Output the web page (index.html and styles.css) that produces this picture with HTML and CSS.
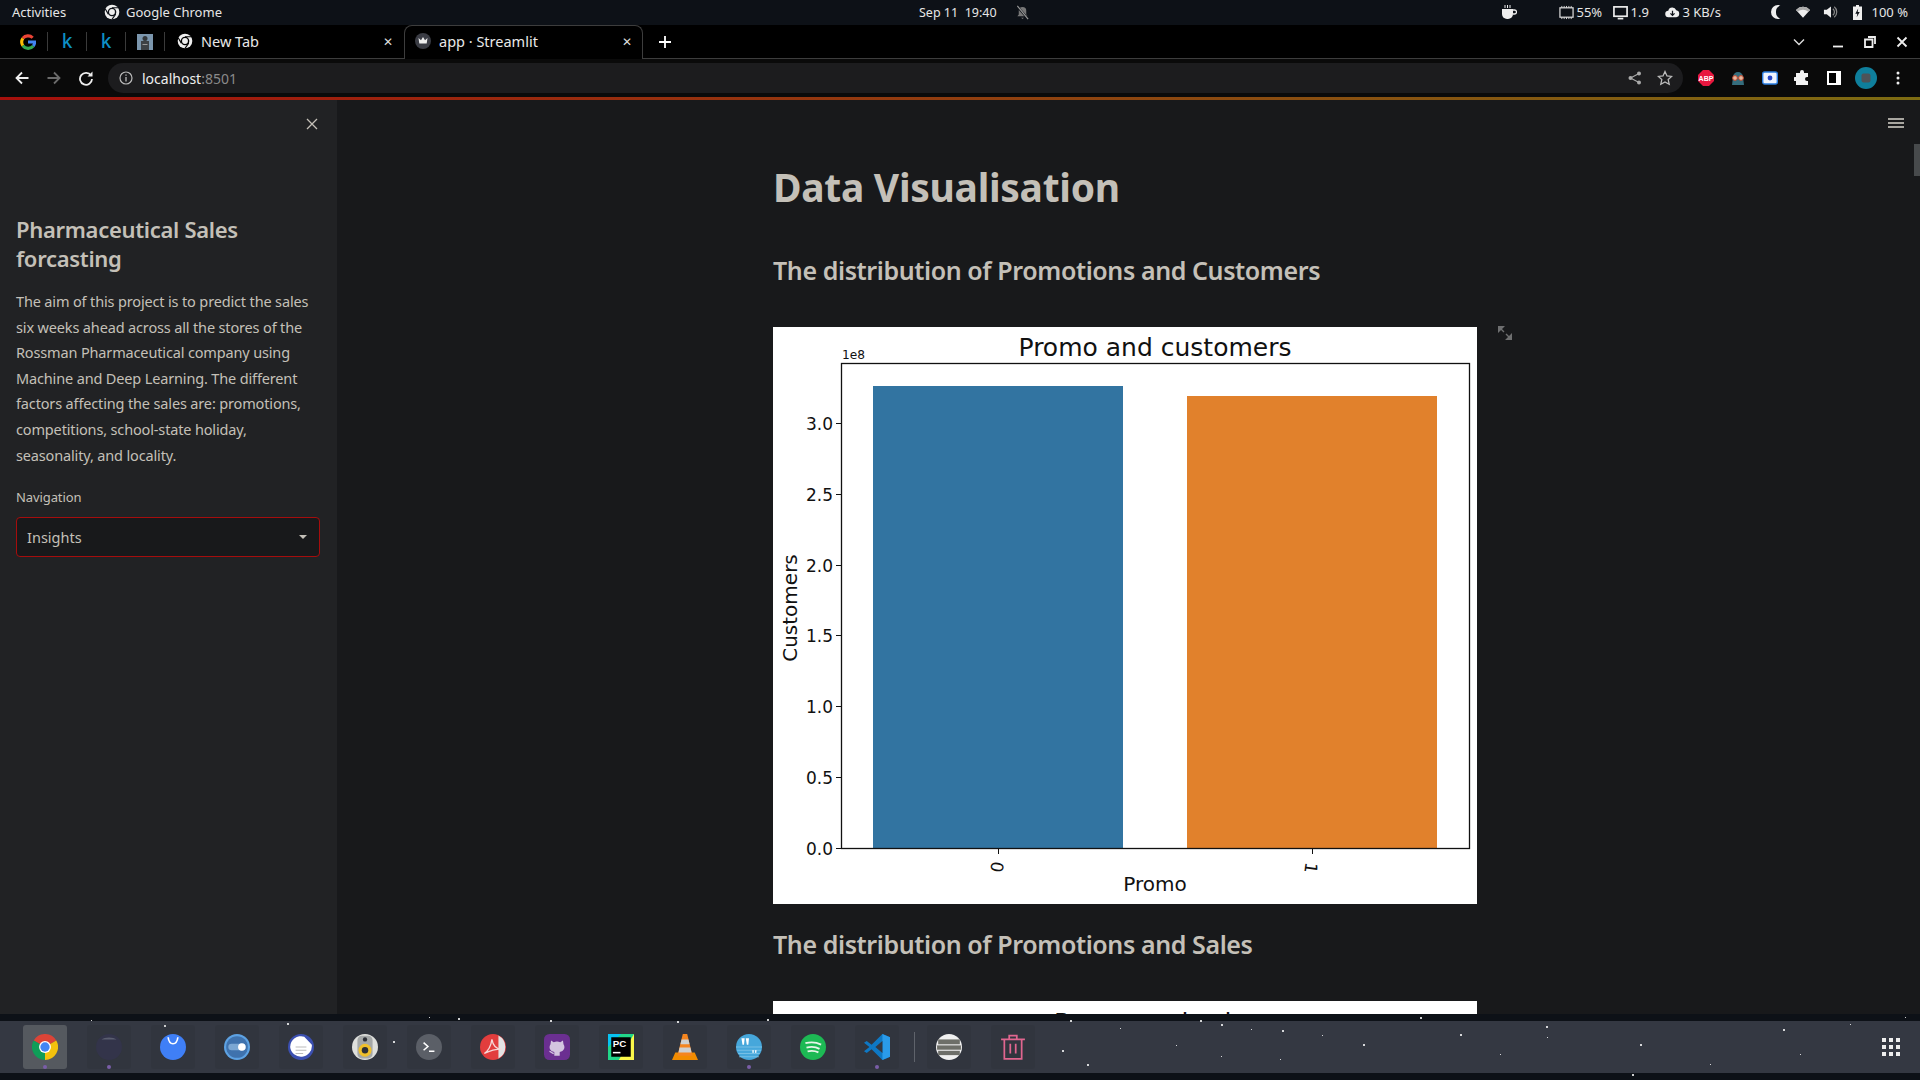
FILE: index.html
```html
<!DOCTYPE html>
<html lang="en">
<head>
    <meta charset="UTF-8">
    <title>app · Streamlit</title>
    <link rel="stylesheet" href="styles.css">
</head>
<body>
    <!-- desktop top bar -->
    <div class="topbar">
        <div class="top-left">
            <span class="activities">Activities</span>
            <span class="top-app">
                <svg class="ic16" viewBox="0 0 24 24"><circle cx="12" cy="12" r="11" fill="#eee"/><circle cx="12" cy="12" r="6.5" fill="#0d1117"/><circle cx="12" cy="12" r="4.4" fill="#eee"/><path d="M12 5.5H22M6.4 15.2 1.8 7M17.6 15.2 12 23" stroke="#0d1117" stroke-width="1.6"/></svg>
                Google Chrome
            </span>
        </div>
        <div class="top-center">
            <span class="clock">Sep 11&nbsp;&nbsp;19:40</span>
            <svg class="bell" viewBox="0 0 16 16"><path d="M8 2a4 4 0 0 0-4 4v4l-1.5 2h11L12 10V6a4 4 0 0 0-4-4zM6.5 13.5h3L8 15z" fill="#777"/><path d="M2 1l12 14" stroke="#0d1117" stroke-width="2.4"/><path d="M2.5 1l11.5 14" stroke="#999" stroke-width="1.2"/></svg>
        </div>
        <div class="top-right">
            <svg class="coffee" viewBox="0 0 16 16"><path d="M1 5h11v5a5 5 0 0 1-5 5H6a5 5 0 0 1-5-5z" fill="#eee"/><path d="M12 6h1.5a1.5 1.5 0 0 1 0 4H12" fill="none" stroke="#eee" stroke-width="1.3"/><path d="M4 1v3M6.5 1v3M9 1v3" stroke="#eee"/></svg>
            <span class="stat stat-cpu">
                <svg class="ic15" viewBox="0 0 16 16"><rect x="1" y="3" width="14" height="10" fill="none" stroke="#ddd" stroke-width="1.3"/><path d="M3 1v2M5.5 1v2M8 1v2M10.5 1v2M13 1v2M3 13v2M5.5 13v2M8 13v2M10.5 13v2M13 13v2" stroke="#ddd"/></svg>
                55%
            </span>
            <span class="stat stat-load">
                <svg class="ic15" viewBox="0 0 16 16"><rect x="1" y="2" width="14" height="10" fill="none" stroke="#eee" stroke-width="1.8"/><path d="M5 14.5h6" stroke="#eee" stroke-width="1.8"/></svg>
                1.9
            </span>
            <span class="stat stat-net">
                <svg class="ic15" viewBox="0 0 16 16"><path d="M4 13a3.5 3.5 0 0 1-.5-7A4.5 4.5 0 0 1 12 5.5 3.8 3.8 0 0 1 12 13z" fill="#eee"/><path d="M8 6v5M5.8 9 8 11.2 10.2 9" stroke="#0d1117" stroke-width="1.3" fill="none"/></svg>
                3 KB/s
            </span>
            <svg class="moon" viewBox="0 0 12 16"><path d="M9 1a7 7 0 0 0 0 14c1 0 1.6-.2 2.4-.5A6.5 6.5 0 0 1 7 8a6.5 6.5 0 0 1 4.4-6.5C10.6 1.2 10 1 9 1z" fill="#eee"/></svg>
            <svg class="wifi" viewBox="0 0 16 14"><path d="M0 4a11 11 0 0 1 16 0L8 13z" fill="#eee"/><path d="M0 4a11 11 0 0 1 16 0l-2 2.2a9 9 0 0 0-12 0z" fill="#aaa"/></svg>
            <svg class="vol" viewBox="0 0 16 14"><path d="M1 4.5h3L8.5 1v12L4 9.5H1z" fill="#eee"/><path d="M10.5 3.5a4.5 4.5 0 0 1 0 7M12 1.5a7 7 0 0 1 0 11" fill="none" stroke="#888" stroke-width="1.3"/></svg>
            <svg class="batt" viewBox="0 0 9 15"><path d="M3 0h3v1.5h3V15H0V1.5h3z" fill="#eee"/><path d="M5.2 3.5 2.3 8.8h2l-.6 3.5 3-5.4h-2z" fill="#0d1117"/></svg>
            <span class="stat-batt">100 %</span>
        </div>
    </div>

    <!-- chrome tab strip -->
    <div class="tabstrip">
        <div class="pinned">
            <span class="pin">
                <svg class="ic16" viewBox="0 0 24 24" fill="none" stroke-width="4.6"><path d="M19 5.6A10 10 0 0 0 4.3 6.5" stroke="#ea4335"/><path d="M4.3 6.5a10 10 0 0 0 0 11" stroke="#fbbc05"/><path d="M4.3 17.500A10 10 0 0 0 20 18" stroke="#34a853"/><path d="M20 18a10 10 0 0 0 2-6H12" stroke="#4285f4"/></svg>
            </span>
            <span class="pin"><span class="kfav">k</span></span>
            <span class="pin"><span class="kfav">k</span></span>
            <span class="pin">
                <svg class="ic16" viewBox="0 0 16 16"><rect width="16" height="16" fill="#7b96ad"/><rect x="4" y="7" width="8" height="9" fill="#3d4145"/><circle cx="8" cy="4.5" r="2.5" fill="#33373a"/><rect x="5.5" y="10" width="5" height="1" fill="#999"/></svg>
            </span>
            <span class="tab-newtab">
                <svg class="ic16" viewBox="0 0 24 24"><circle cx="12" cy="12" r="11" fill="#eee"/><circle cx="12" cy="12" r="6.5" fill="#000"/><circle cx="12" cy="12" r="4.4" fill="#eee"/><path d="M12 5.5H22M6.4 15.2 1.8 7M17.6 15.2 12 23" stroke="#000" stroke-width="1.6"/></svg>
                <span class="tab-title">New Tab</span>
                <span class="tab-x">✕</span>
            </span>
        </div>
        <div class="tab-active">
            <svg class="ic16" viewBox="0 0 16 16"><circle cx="8" cy="8" r="8" fill="#3a3c44"/><path d="M3.5 5 6 7.2 8 4l2 3.2L12.500 5l-.8 5.500H4.300z" fill="#eee"/></svg>
            <span class="tab-title">app · Streamlit</span>
            <span class="tab-x">✕</span>
        </div>
        <svg class="newtab" viewBox="0 0 14 14"><path d="M7 1v12M1 7h12" stroke="#fff" stroke-width="1.8"/></svg>
        <div class="win-btns">
            <svg class="win-chev" viewBox="0 0 12 8"><path d="M1 1.5 6 6.5l5-5" fill="none" stroke="#ddd" stroke-width="1.4"/></svg>
            <svg class="win-btn" viewBox="0 0 12 12"><path d="M1 10.5h10" stroke="#eee" stroke-width="1.8"/></svg>
            <svg class="win-btn" viewBox="0 0 12 12"><path d="M4 1h7v7M1 3.5h7.5V11H1z" fill="none" stroke="#eee" stroke-width="1.8"/></svg>
            <svg class="win-btn" viewBox="0 0 12 12"><path d="M1.5 1.5l9 9M10.5 1.5l-9 9" stroke="#eee" stroke-width="1.8"/></svg>
        </div>
    </div>

    <!-- chrome toolbar -->
    <div class="toolbar">
        <svg class="nav-ic" viewBox="0 0 16 16"><path d="M14.5 8h-12M8 2.5 2.500 8 8 13.500" fill="none" stroke="#eee" stroke-width="1.8"/></svg>
        <svg class="nav-ic" viewBox="0 0 16 16"><path d="M1.5 8h12M8 2.5 13.500 8 8 13.500" fill="none" stroke="#6b6b6b" stroke-width="1.8"/></svg>
        <svg class="nav-ic" viewBox="0 0 16 16"><path d="M13 5.5A6 6 0 1 0 14 9" fill="none" stroke="#eee" stroke-width="1.8"/><path d="M14.5 1.5v5h-5z" fill="#eee"/></svg>
        <div class="omnibox">
            <svg class="info" viewBox="0 0 14 14"><circle cx="7" cy="7" r="6" fill="none" stroke="#bbb" stroke-width="1.2"/><path d="M7 6v4.5M7 3.5v1.3" stroke="#bbb" stroke-width="1.3"/></svg>
            <span class="url">localhost<span class="url-port">:8501</span></span>
            <svg class="omni-ic share" viewBox="0 0 14 14"><circle cx="11" cy="2.5" r="2" fill="#aaa"/><circle cx="11" cy="11.5" r="2" fill="#aaa"/><circle cx="2.5" cy="7" r="2" fill="#aaa"/><path d="M11 2.5 2.5 7 11 11.5" fill="none" stroke="#aaa" stroke-width="1.1"/></svg>
            <svg class="omni-ic star" viewBox="0 0 16 16"><path d="M8 1.5l2 4.4 4.7.5-3.500 3.200 1 4.700L8 11.900l-4.200 2.400 1-4.700L1.300 6.400 6 5.900z" fill="none" stroke="#bbb" stroke-width="1.3"/></svg>
        </div>
        <div class="ext-row">
            <svg class="ext" viewBox="0 0 16 16"><path d="M5 0h6l5 5v6l-5 5H5l-5-5V5z" fill="#e8173f"/><text x="8" y="10.5" class="abp-text">ABP</text></svg>
            <svg class="ext" viewBox="0 0 16 16"><path d="M3 7a5 5 0 0 1 10 0l1 8H2z" fill="#356d7d"/><circle cx="5" cy="8" r="2.4" fill="#e5b8a0" stroke="#c7472c"/><circle cx="11" cy="8" r="2.4" fill="#e5b8a0" stroke="#c7472c"/></svg>
            <svg class="ext" viewBox="0 0 16 16"><rect x=".7" y="2" width="14.6" height="12" rx="2" fill="#eef4ff" stroke="#2a7de1" stroke-width="1.4"/><circle cx="8" cy="8" r="2.4" fill="#2747c9"/></svg>
            <svg class="ext" viewBox="0 0 16 16"><path d="M6 2a2 2 0 0 1 4 0v1h4v4h-1a2 2 0 0 0 0 4h1v4H2v-4H1a2 2 0 0 1 0-4h1V3h4z" fill="#f2f2f2"/></svg>
            <svg class="ext" viewBox="0 0 16 16"><path d="M1 1h14v14H1z" fill="#fff"/><rect x="3" y="3" width="7" height="10" fill="#000"/></svg>
            <svg class="ext avatar" viewBox="0 0 22 22"><circle cx="11" cy="11" r="11" fill="#0f7f9c"/><rect x="6.5" y="6.5" width="9" height="9" rx="2" fill="#4d5358"/></svg>
            <svg class="ext" viewBox="0 0 16 16"><circle cx="8" cy="3" r="1.5" fill="#eee"/><circle cx="8" cy="8" r="1.5" fill="#eee"/><circle cx="8" cy="13" r="1.5" fill="#eee"/></svg>
        </div>
    </div>
    <div class="deco"></div>

    <!-- streamlit app -->
    <div class="app">
        <aside class="sidebar">
            <div class="side-close">
                <svg class="close-ic" viewBox="0 0 12 12"><path d="M1 1l10 10M11 1 1 11" stroke="#c4c0b8" stroke-width="1.3"/></svg>
            </div>
            <h2 class="side-title">Pharmaceutical Sales forcasting</h2>
            <p class="side-text">The aim of this project is to predict the sales six weeks ahead across all the stores of the Rossman Pharmaceutical company using Machine and Deep Learning. The different factors affecting the sales are: promotions, competitions, school-state holiday, seasonality, and locality.</p>
            <label class="nav-label">Navigation</label>
            <div class="select">
                <span>Insights</span>
                <span class="caret"></span>
            </div>
        </aside>
        <main class="main">
            <div class="hamburger"><span></span><span></span><span></span></div>
            <div class="scroll-thumb"></div>
            <div class="content">
                <h1>Data Visualisation</h1>
                <h2 class="sec-first">The distribution of Promotions and Customers</h2>
                <div class="chart-wrap">
                    <svg class="chart" viewBox="0 0 704 577">
                        <rect width="704" height="577" fill="#fff"/>
                        <text x="382" y="29" class="c-title">Promo and customers</text>
                        <text x="69" y="32" class="c-offset">1e8</text>
                        <rect x="100" y="59" width="250" height="462" fill="#3274a1"/>
                        <rect x="414" y="69" width="250" height="452" fill="#e1812c"/>
                        <rect x="68.5" y="36.5" width="628" height="485" fill="none" stroke="#111" stroke-width="1.3"/>
                        <path d="M63 96.5h5M63 167.5h5M63 238.5h5M63 308.5h5M63 379.5h5M63 450.5h5M63 521.5h5M225.5 522v5M539.5 522v5" stroke="#111"/>
                        <text x="60" y="103" class="c-tick">3.0</text>
                        <text x="60" y="174" class="c-tick">2.5</text>
                        <text x="60" y="245" class="c-tick">2.0</text>
                        <text x="60" y="315" class="c-tick">1.5</text>
                        <text x="60" y="386" class="c-tick">1.0</text>
                        <text x="60" y="457" class="c-tick">0.5</text>
                        <text x="60" y="528" class="c-tick">0.0</text>
                        <text transform="translate(218 539) rotate(98)" class="c-xtick">0</text>
                        <text transform="translate(532 540) rotate(98)" class="c-xtick">1</text>
                        <text x="382" y="564" class="c-label">Promo</text>
                        <text transform="translate(24 281) rotate(-90)" class="c-label">Customers</text>
                    </svg>
                    <svg class="expand" viewBox="0 0 14 14"><path d="M0 0h7L0 7zM14 14H7l7-7z" fill="#6e6f70"/><path d="M2 2l4 4M12 12 8 8" stroke="#6e6f70" stroke-width="1.4"/></svg>
                </div>
                <h2 class="sec-next">The distribution of Promotions and Sales</h2>
                <div class="chart-next">
                    <span class="c-next-title">Promo and sales</span>
                </div>
            </div>
        </main>
    </div>

    <!-- dock -->
    <div class="dock-area">
        <svg class="stars" viewBox="0 0 1920 66">
            <g fill="#fff" opacity="0.8">
                <rect x="91" y="6" width="1" height="1"/><rect x="164" y="11" width="2" height="2"/><rect x="287" y="9" width="2" height="2"/><rect x="393" y="27" width="2" height="2"/><rect x="429" y="3" width="1" height="1"/><rect x="458" y="4" width="2" height="2"/><rect x="550" y="6" width="2" height="2"/><rect x="677" y="7" width="2" height="2"/><rect x="767" y="5" width="2" height="2"/><rect x="1070" y="6" width="2" height="2"/><rect x="1200" y="6" width="2" height="2"/><rect x="1221" y="10" width="2" height="2"/><rect x="1062" y="36" width="2" height="2"/><rect x="1087" y="50" width="2" height="2"/><rect x="1120" y="14" width="1" height="1"/><rect x="1176" y="31" width="1" height="1"/><rect x="1221" y="42" width="1" height="1"/><rect x="1251" y="15" width="1" height="1"/><rect x="1282" y="16" width="2" height="2"/><rect x="1322" y="21" width="1" height="1"/><rect x="1363" y="30" width="2" height="2"/><rect x="1280" y="45" width="1" height="1"/><rect x="1420" y="3" width="2" height="2"/><rect x="1460" y="20" width="2" height="2"/><rect x="1500" y="40" width="1" height="1"/><rect x="1546" y="12" width="2" height="2"/><rect x="1547" y="23" width="1" height="1"/><rect x="1640" y="30" width="2" height="2"/><rect x="1632" y="60" width="2" height="2"/><rect x="1710" y="50" width="1" height="1"/><rect x="1783" y="15" width="2" height="2"/><rect x="1800" y="40" width="1" height="1"/><rect x="1850" y="10" width="1" height="1"/><rect x="1905" y="3" width="1" height="1"/>
            </g>
        </svg>
        <div class="dock">
            <div class="dock-cell is-active">
                <svg class="dock-ic" viewBox="0 0 24 24"><path d="M12 12 1.6 6A12 12 0 0 1 22.4 6z" fill="#db4437"/><path d="M12 12 22.4 6A12 12 0 0 1 12 24z" fill="#f4c20d"/><path d="M12 12V24A12 12 0 0 1 1.6 6z" fill="#0f9d58"/><circle cx="12" cy="12" r="5.5" fill="#fff"/><circle cx="12" cy="12" r="4.3" fill="#4285f4"/></svg>
                <i class="dot"></i>
            </div>
            <div class="dock-cell">
                <svg class="dock-ic" viewBox="0 0 24 24"><circle cx="12" cy="12" r="12" fill="#33344a"/><path d="M5 5c3-2.5 11-2.5 14 0z" fill="#5b5e70"/></svg>
                <i class="dot"></i>
            </div>
            <div class="dock-cell">
                <svg class="dock-ic" viewBox="0 0 24 24"><circle cx="12" cy="12" r="12" fill="#3f7ff6"/><path d="M7.5 3c.5 4 2 6 4.5 6s4-2 4.5-6" fill="none" stroke="#fff" stroke-width="1.5"/></svg>
            </div>
            <div class="dock-cell">
                <svg class="dock-ic" viewBox="0 0 24 24"><circle cx="12" cy="12" r="12" fill="#5da2e3"/><circle cx="12" cy="12" r="10" fill="#3f72ad"/><rect x="4" y="9" width="16" height="6" rx="3" fill="#7ba7d3"/><circle cx="16.5" cy="12" r="3.5" fill="#fff"/></svg>
            </div>
            <div class="dock-cell">
                <svg class="dock-ic" viewBox="0 0 24 24"><circle cx="12" cy="12" r="12" fill="#3b4fb0"/><path d="M2 12A10 10 0 0 1 15 2.5L22 10A10 10 0 1 1 2 12z" fill="#fff"/><path d="M7 12h10M7 15h10M7 18h7" stroke="#bbb"/></svg>
            </div>
            <div class="dock-cell">
                <svg class="dock-ic" viewBox="0 0 24 24"><circle cx="12" cy="12" r="12" fill="#dfe0dd"/><rect x="5" y="1.5" width="14" height="21" rx="4" fill="#a5a8a8"/><circle cx="12" cy="15" r="6" fill="#f0c02c"/><circle cx="12" cy="15" r="3" fill="#2c2f36"/><circle cx="12" cy="5" r="2" fill="#2c2f36"/></svg>
            </div>
            <div class="dock-cell">
                <svg class="dock-ic term" viewBox="0 0 24 24"><circle cx="12" cy="12" r="12" fill="#5b5f67"/><path d="M7 8l4 3.5L7 15M12 16h5" fill="none" stroke="#fff" stroke-width="1.4"/></svg>
            </div>
            <div class="dock-cell">
                <svg class="dock-ic" viewBox="0 0 24 24"><circle cx="12" cy="12" r="12" fill="#e23d3d"/><path d="M17 1.4A12 12 0 0 1 17 22.6z" fill="#e3e3e3"/><path d="M4 18c3-2 6-6 7-13 1 6 4 9 9 9-5 0-10 1-16 4z" fill="none" stroke="#f6d7d7" stroke-width="1.2"/></svg>
            </div>
            <div class="dock-cell">
                <svg class="dock-ic" viewBox="0 0 24 24"><rect width="24" height="24" rx="5" fill="#6b2f91"/><path d="M6.5 6 9 7.5a8 8 0 0 1 6 0L17.5 6l.5 3.5c2 3 .5 6.5-3.5 7v3.5h-5V16.5C5.5 16 4 12.5 6 9.5z" fill="#d4c4e0"/><path d="M5 16c1.5 0 2 2 4 2" fill="none" stroke="#d4c4e0" stroke-width="1.2"/></svg>
            </div>
            <div class="dock-cell">
                <svg class="dock-ic" viewBox="0 0 24 24"><rect width="24" height="24" fill="#21d789"/><path d="M24 0v24H10z" fill="#fcf84a"/><path d="M0 0h12L0 12z" fill="#07c3f2"/><rect x="3" y="3" width="18" height="18" fill="#000"/><text x="4.3" y="12" class="pc-text">PC</text><rect x="4.5" y="16.5" width="7" height="1.4" fill="#fff"/></svg>
            </div>
            <div class="dock-cell">
                <svg class="dock-ic" viewBox="0 0 24 24"><path d="M3 17h18l3 7H0z" fill="#f28c00"/><path d="M10 0h4l5 20H5z" fill="#f5851f"/><path d="M8.8 5h6.4l1 4.5H7.8zM7 12.5h10l1 4.5H6z" fill="#cfd0d0"/></svg>
            </div>
            <div class="dock-cell">
                <svg class="dock-ic" viewBox="0 0 24 24"><circle cx="12" cy="12" r="12" fill="#46a7db"/><path d="M0 12h24M1 15h22M2 18h20M3 21h18" stroke="#76c0e6"/><path d="M5 4h3l-.6 6H6zM9 4h3l-.6 6H10zM15 15h1.5l-.3 2.5h-.9zM17.5 15H19l-.3 2.5h-.9z" fill="#fff"/></svg>
                <i class="dot"></i>
            </div>
            <div class="dock-cell">
                <svg class="dock-ic" viewBox="0 0 24 24"><circle cx="12" cy="12" r="12" fill="#1db954"/><path d="M5 8.5c5-1.4 10-1 14.5 1.3M6 12.5c4-1 8.5-.8 12 1.2M7 16c3.5-.8 7-.5 10 1" fill="none" stroke="#e8f5e9" stroke-width="1.7"/></svg>
            </div>
            <div class="dock-cell">
                <svg class="dock-ic" viewBox="0 0 24 24"><path d="M17 0l7 3v18l-7 3L7 14l-4.5 3.5L0 16l5-4-5-4 2.5-1.500L7 10z" fill="#0e78c4"/><path d="M17 0l7 3v18l-7 3z" fill="#2a9bea"/><path d="M17 6.5 10.5 12l6.5 5.5z" fill="#343842"/></svg>
                <i class="dot"></i>
            </div>
            <div class="dock-sep"></div>
            <div class="dock-cell">
                <svg class="dock-ic" viewBox="0 0 24 24"><circle cx="12" cy="12" r="12" fill="#f0f0f0"/><rect x="2" y="5" width="20" height="4.5" fill="#6e6f69"/><rect x="1" y="10.5" width="22" height="4" fill="#6e6f69"/><rect x="2" y="15.5" width="20" height="4" fill="#6e6f69"/></svg>
            </div>
            <div class="dock-cell">
                <svg class="dock-ic" viewBox="0 0 24 24"><path d="M1 5h22M8.5 5V1.5h7V5M4 5v18h16V5M9.5 9v9M14.5 9v9" fill="none" stroke="#e0668f" stroke-width="1.6"/></svg>
            </div>
            <svg class="apps-grid" viewBox="0 0 18 18"><path d="M0 0h4v4H0zM7 0h4v4H7zM14 0h4v4h-4zM0 7h4v4H0zM7 7h4v4H7zM14 7h4v4h-4zM0 14h4v4H0zM7 14h4v4H7zM14 14h4v4h-4z" fill="#eee"/></svg>
        </div>
    </div>
</body>
</html>
```
FILE: styles.css
```css
/* page */
body {
    margin: 0;
    width: 1920px;
    height: 1080px;
    overflow: hidden;
    display: flex;
    flex-direction: column;
    background-color: #18191b;
    color: #eee;
    font-family: "Noto Sans", sans-serif;
}

svg {
    display: block;
    flex: none;
}

.ic15 { width: 15px; height: 15px; }
.ic16 { width: 16px; height: 16px; }

/* desktop top bar */
.topbar {
    height: 25px;
    flex: none;
    box-sizing: border-box;
    padding-bottom: 1px;
    display: flex;
    align-items: center;
    position: relative;
    background-color: #0d1117;
    font-size: 13px;
    color: #e6e6e6;
}

.top-left {
    display: flex;
    align-items: center;
    padding-left: 12px;
}

.activities {
    width: 92px;
}

.top-app {
    display: flex;
    align-items: center;
    gap: 6px;
}

.top-center {
    position: absolute;
    left: 919px;
    display: flex;
    align-items: center;
    gap: 18px;
    font-size: 12.5px;
}

.bell {
    width: 15px;
    height: 15px;
}

.top-right {
    margin-left: auto;
    padding-right: 12px;
    display: flex;
    align-items: center;
}

.coffee { width: 16px; height: 16px; margin-right: 42px; }

.stat {
    display: flex;
    align-items: center;
    gap: 3px;
}

.stat-cpu { width: 54px; }
.stat-load { width: 52px; }
.stat-net { width: 104px; }

.moon { width: 12px; height: 16px; margin-right: 15px; }
.wifi { width: 14px; height: 13px; margin-right: 13px; }
.vol { width: 15px; height: 14px; margin-right: 15px; }
.batt { width: 9px; height: 15px; margin-right: 10px; }

/* tab strip */
.tabstrip {
    height: 33px;
    flex: none;
    display: flex;
    align-items: stretch;
    background-color: #000;
    border-bottom: 1px solid #3d3d3d;
    font-size: 14.5px;
}

.pinned {
    display: flex;
    align-items: center;
    padding-left: 9px;
}

.pin {
    width: 39px;
    height: 19px;
    display: flex;
    align-items: center;
    justify-content: center;
    border-right: 1px solid #3a3a3a;
    box-sizing: border-box;
}

.kfav {
    color: #0d8fc7;
    font-size: 19px;
    font-weight: 500;
    line-height: 19px;
}

.tab-newtab {
    display: flex;
    align-items: center;
    width: 234px;
    padding: 0 0 1px 12px;
    box-sizing: border-box;
}

.tab-title {
    margin-left: 8px;
    flex: 1;
    color: #e8e8e8;
}

.tab-x {
    font-size: 12px;
    color: #ddd;
    margin-right: 6px;
}

.tab-active {
    width: 239px;
    height: 34px;
    box-sizing: border-box;
    padding: 0 0 3px 10px;
    display: flex;
    align-items: center;
    background-color: #000;
    border: 1px solid #3d3d3d;
    border-bottom: none;
    border-radius: 8px 8px 0 0;
    margin-left: 5px;
}

.tab-active .tab-x {
    margin-right: 10px;
}

.newtab {
    width: 14px;
    height: 14px;
    align-self: center;
    margin-left: 15px;
}

.win-btns {
    margin-left: auto;
    display: flex;
    align-items: center;
    padding-right: 12px;
}

.win-chev { width: 12px; height: 8px; margin-right: 27px; }
.win-btn { width: 12px; height: 12px; margin-left: 20px; }
.win-chev + .win-btn { margin-left: 0; }

/* toolbar */
.toolbar {
    height: 38px;
    flex: none;
    box-sizing: border-box;
    display: flex;
    align-items: center;
    padding-left: 14px;
    background-color: #0a0a0a;
}

.nav-ic {
    width: 16px;
    height: 16px;
    margin-right: 16px;
}

.omnibox {
    width: 1575px;
    height: 30px;
    margin-left: -2px;
    padding: 0 10px 0 11px;
    box-sizing: border-box;
    display: flex;
    align-items: center;
    background-color: #1c1c1e;
    border-radius: 15px;
    font-size: 14px;
}

.info {
    width: 14px;
    height: 14px;
    margin-right: 9px;
}

.url {
    flex: 1;
    color: #eee;
}

.url-port {
    color: #8a8a8a;
}

.omni-ic {
    width: 14px;
    height: 14px;
}

.share { margin-right: 15px; }
.star { width: 16px; height: 16px; }

.ext-row {
    display: flex;
    align-items: center;
    padding-left: 15px;
    gap: 16px;
}

.ext {
    width: 16px;
    height: 16px;
}

.ext.avatar {
    width: 22px;
    height: 22px;
    margin: 0 -3px;
}

.abp-text {
    font-family: "Liberation Sans", sans-serif;
    font-size: 7px;
    font-weight: bold;
    fill: #fff;
    text-anchor: middle;
}

.deco {
    height: 3px;
    flex: none;
    background: linear-gradient(90deg, #a6100c, #7d6c12);
}

/* streamlit layout */
.app {
    flex: 1;
    display: flex;
    min-height: 0;
}

.sidebar {
    width: 337px;
    flex: none;
    box-sizing: border-box;
    padding: 0 16px;
    background-color: #212224;
    color: #c4c0b8;
}

.side-close {
    height: 48px;
    display: flex;
    align-items: center;
    justify-content: flex-end;
    padding-right: 3px;
}

.close-ic {
    width: 12px;
    height: 12px;
}

.side-title {
    margin: 67px 0 0;
    font-size: 22px;
    line-height: 29px;
    font-weight: 600;
    letter-spacing: -0.3px;
}

.side-text {
    margin: 16px 0 0;
    font-size: 14.5px;
    line-height: 25.6px;
    letter-spacing: -0.15px;
}

.nav-label {
    display: block;
    margin-top: 19px;
    font-size: 13px;
    line-height: 20px;
    letter-spacing: -0.1px;
}

.select {
    width: 304px;
    height: 40px;
    margin-top: 10px;
    box-sizing: border-box;
    padding: 0 12px 0 10px;
    display: flex;
    align-items: center;
    justify-content: space-between;
    background-color: #18191b;
    border: 1px solid #a50d0d;
    border-radius: 4px;
    font-size: 14.5px;
}

.caret {
    width: 0;
    height: 0;
    border-left: 4px solid transparent;
    border-right: 4px solid transparent;
    border-top: 4px solid #c4c0b8;
}

.main {
    flex: 1;
    position: relative;
    overflow: hidden;
    background-color: #18191b;
    color: #c4c0b8;
}

.hamburger {
    position: absolute;
    top: 18px;
    right: 16px;
    display: flex;
    flex-direction: column;
    gap: 2px;
}

.hamburger span {
    width: 16px;
    height: 2px;
    background-color: #a8a6a0;
}

.scroll-thumb {
    position: absolute;
    top: 44px;
    right: 0;
    width: 6px;
    height: 32px;
    background-color: #474a4c;
}

.content {
    width: 704px;
    margin-left: 436px;
}

h1 {
    margin: 57px 0 0;
    font-size: 39px;
    line-height: 60px;
    font-weight: 700;
    letter-spacing: -0.3px;
}

.sec-first,
.sec-next {
    font-size: 25px;
    line-height: 40px;
    font-weight: 600;
    letter-spacing: -0.4px;
}

.sec-first { margin: 33px 0 37px; }
.sec-next { margin: 20px 0 37px; }

/* charts */
.chart-wrap {
    position: relative;
    height: 577px;
}

.chart {
    width: 704px;
    height: 577px;
}

.expand {
    position: absolute;
    left: 725px;
    top: -1px;
    width: 14px;
    height: 14px;
}

.chart-next {
    height: 300px;
    background-color: #fff;
    color: #111;
    text-align: center;
    font-family: "DejaVu Sans", sans-serif;
    font-size: 25px;
    line-height: 30px;
    padding: 7px 0 0 64px;
    box-sizing: border-box;
}

.chart text {
    font-family: "DejaVu Sans", sans-serif;
    fill: #111;
}

.c-title {
    font-size: 25px;
    text-anchor: middle;
}

.c-offset {
    font-size: 12.2px;
}

.c-tick {
    font-size: 17px;
    text-anchor: end;
}

.c-xtick {
    font-size: 17px;
    text-anchor: middle;
}

.c-label {
    font-size: 20px;
    text-anchor: middle;
}

/* dock */
.dock-area {
    height: 66px;
    flex: none;
    box-sizing: border-box;
    padding-top: 7px;
    position: relative;
    background-color: #0d1117;
}

.stars {
    position: absolute;
    left: 0;
    top: 0;
    width: 1920px;
    height: 66px;
}

.dock {
    height: 52px;
    display: flex;
    align-items: center;
    padding: 0 20px 0 13px;
    background-color: #343842;
}

.dock-cell {
    width: 44px;
    height: 44px;
    margin: 0 10px;
    flex: none;
    position: relative;
    display: flex;
    align-items: center;
    justify-content: center;
    border-radius: 3px;
    background-color: rgba(0, 0, 0, 0.05);
}

.is-active {
    background-color: #55595f;
}

.dock-ic {
    width: 26px;
    height: 26px;
}

.dot {
    position: absolute;
    left: 50%;
    bottom: 0;
    width: 4px;
    height: 4px;
    margin-left: -2px;
    border-radius: 50%;
    background-color: #7a5ea8;
}

.dock-sep {
    width: 1px;
    height: 30px;
    margin: 0 2px 0 5px;
    background-color: #5f636b;
}

.pc-text {
    font-family: "Liberation Sans", sans-serif;
    font-size: 9px;
    font-weight: bold;
    fill: #fff;
}

.apps-grid {
    width: 18px;
    height: 18px;
    margin-left: auto;
}
```
